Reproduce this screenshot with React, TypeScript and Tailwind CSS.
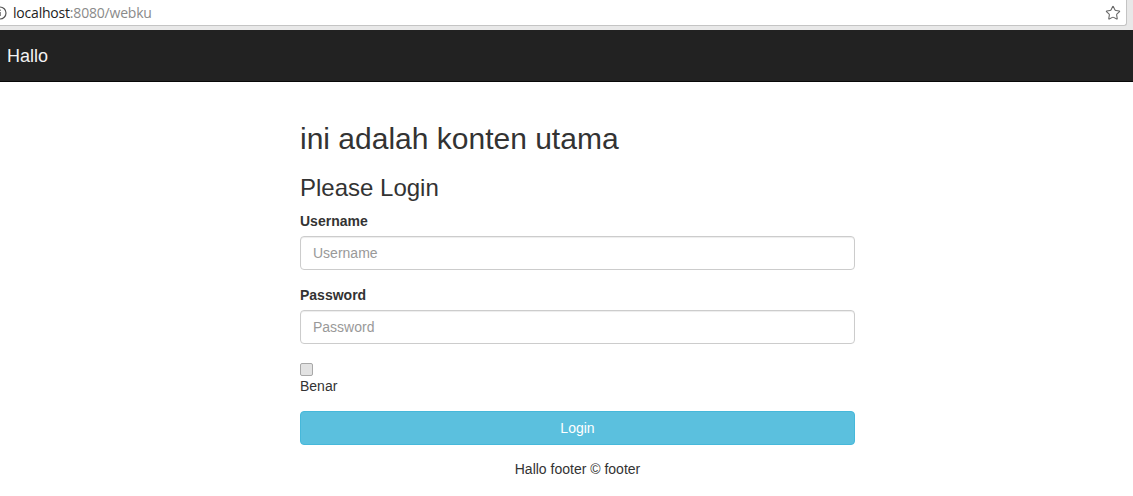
import { Star } from 'lucide-react';

export default function App() {
  return (
    <div className="min-h-[496px] bg-white text-[#333] font-['Liberation_Sans',Arial,sans-serif] text-[14px] leading-[20px]">
      {/* Browser bar */}
      <div className="h-[30px] bg-[#e8e8e8] pr-[6px]">
        <div className="h-[26px] bg-white border-b border-r border-[#c4c4c4] rounded-br-[3px] flex items-center">
          <svg className="w-[14px] h-[14px] -ml-[7px] mr-[6px]" viewBox="0 0 14 14" fill="none">
            <circle cx="7" cy="7" r="6" stroke="#555" strokeWidth="1.2" />
            <rect x="6.4" y="6" width="1.3" height="4" fill="#555" />
            <rect x="6.4" y="3.6" width="1.3" height="1.3" fill="#555" />
          </svg>
          <span className="text-[14px] font-['Open_Sans',sans-serif] tracking-[-0.2px]">
            <span className="text-[#222]">localhost</span>
            <span className="text-[#8a8a8a]">:8080/webku</span>
          </span>
          <Star className="ml-auto mr-[5px] w-[16px] h-[16px] text-[#666]" strokeWidth={1.6} />
        </div>
      </div>

      {/* Navbar */}
      <nav className="h-[52px] bg-[#222] border-b border-[#080808] flex items-center px-[7px]">
        <span className="text-[18px] text-[#f2f2f2]">Hallo</span>
      </nav>

      {/* Content */}
      <div className="ml-[300px] w-[555px] pt-[40px]">
        <h2 className="text-[30px] leading-[33px] font-normal">ini adalah konten utama</h2>
        <h3 className="mt-[20px] text-[24px] leading-[26px] font-normal">Please Login</h3>
        <form className="mt-[10px]">
          <div className="mb-[15px]">
            <label className="block font-bold mb-[5px]">Username</label>
            <input
              placeholder="Username"
              className="w-full h-[34px] px-[12px] border border-[#ccc] rounded-[4px] text-[14px] placeholder:text-[#999] shadow-[inset_0_1px_1px_rgba(0,0,0,0.075)] outline-none"
            />
          </div>
          <div className="mb-[15px]">
            <label className="block font-bold mb-[5px]">Password</label>
            <input
              type="password"
              placeholder="Password"
              className="w-full h-[34px] px-[12px] border border-[#ccc] rounded-[4px] text-[14px] placeholder:text-[#999] shadow-[inset_0_1px_1px_rgba(0,0,0,0.075)] outline-none"
            />
          </div>
          <div className="mb-[15px] pt-[4px]">
            <input
              type="checkbox"
              className="block appearance-none w-[13px] h-[13px] bg-[#e2e2e2] border border-[#a8a8a8] rounded-[2px]"
            />
            <div>Benar</div>
          </div>
          <button
            type="button"
            className="w-full h-[34px] bg-[#5bc0de] border border-[#46b8da] rounded-[4px] text-white text-[14px]"
          >
            Login
          </button>
        </form>
        <footer className="mt-[14px] text-center">Hallo footer © footer</footer>
      </div>
    </div>
  );
}
